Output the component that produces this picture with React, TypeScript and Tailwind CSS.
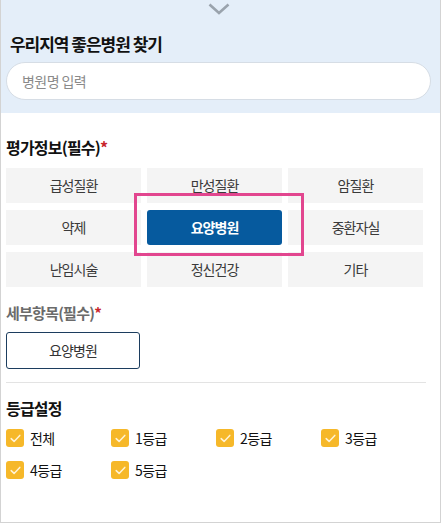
import React from "react";

const categories = [
    "급성질환",
    "만성질환",
    "암질환",
    "약제",
    "요양병원",
    "중환자실",
    "난임시술",
    "정신건강",
    "기타",
];

const grades = ["전체", "1등급", "2등급", "3등급", "4등급", "5등급"];

const CheckBox = ({ label }: { label: string }) => {
    return (
        <label className="flex w-[105px] items-center gap-[6px]">
            <span className="flex h-[18px] w-[18px] items-center justify-center rounded-[3px] bg-[#f6b829]">
                <svg width="11" height="9" viewBox="0 0 11 9" fill="none">
                    <path
                        d="M1.2 4.6 L4.1 7.4 L9.8 1.4"
                        stroke="#fff3d6"
                        strokeWidth="1.5"
                        strokeLinecap="round"
                        strokeLinejoin="round"
                    />
                </svg>
            </span>
            <span className="text-[14px] leading-[20px] tracking-[-0.04em] text-[#111]">{label}</span>
        </label>
    );
};

export default function App() {
    return (
        <div
            className="h-[523px] w-[441px] overflow-hidden border-x border-b border-[#d3d3d3] bg-white"
            style={{ fontFamily: '"Noto Sans CJK KR", "Noto Sans", sans-serif' }}
        >
            {/* search header */}
            <div className="bg-[#e4eef9] pb-[13px]">
                <div className="flex justify-center pt-[3px]">
                    <svg width="22" height="12" viewBox="0 0 22 12" fill="none" className="-ml-[3px]">
                        <path d="M1.5 1.5 L11 10 L20.5 1.5" stroke="#9aa3ad" strokeWidth="2.6" />
                    </svg>
                </div>
                <h2 className="mt-[16px] pl-[9px] text-[17px] font-bold leading-[26px] tracking-[-0.06em] text-[#111]">
                    우리지역 좋은병원 찾기
                </h2>
                <div className="ml-[5px] mt-[5px] flex h-[38px] w-[425px] items-center rounded-full border border-[#d6dde5] bg-white pl-[15px]">
                    <input
                        placeholder="병원명 입력"
                        className="w-full bg-transparent text-[14px] tracking-[-0.04em] text-[#333] outline-none placeholder:text-[#8a8a8a]"
                    />
                </div>
            </div>

            <div className="px-[5px]">
                <h3 className="pt-[22px] text-[16px] font-bold leading-[24px] tracking-[-0.05em] text-[#111]">
                    평가정보(필수)<span className="text-[#c9252c]">*</span>
                </h3>

                <div className="relative mt-[9px] grid w-[417px] grid-cols-3 gap-x-[6px] gap-y-[7px] tracking-[-0.06em]">
                    {categories.map((c) =>
                        c === "요양병원" ? (
                            <div
                                key={c}
                                className="flex h-[35px] items-center justify-center rounded-[3px] bg-[#065a9e] text-[14px] font-bold text-white"
                            >
                                {c}
                            </div>
                        ) : (
                            <div
                                key={c}
                                className="flex h-[35px] items-center justify-center bg-[#f4f4f4] text-[14px] text-[#3a3a3a]"
                            >
                                {c}
                            </div>
                        )
                    )}
                    <div className="pointer-events-none absolute left-[128px] top-[25px] h-[63px] w-[170px] border-[3px] border-[#e2468f]" />
                </div>

                <h3 className="mt-[15px] text-[15px] font-bold leading-[22px] tracking-[-0.05em] text-[#6b6b6b]">
                    세부항목(필수)<span className="text-[#c9252c]">*</span>
                </h3>
                <div className="mt-[8px] flex h-[37px] w-[134px] items-center justify-center rounded-[3px] border border-[#1c3d5e] text-[14px] tracking-[-0.06em] text-[#333]">
                    요양병원
                </div>

                <div className="mt-[13px] h-px w-[420px] bg-[#e3e3e3]" />

                <h3 className="mt-[13px] text-[16px] font-bold leading-[24px] tracking-[-0.05em] text-[#111]">등급설정</h3>
                <div className="mt-[8px] flex flex-wrap gap-y-[12px]">
                    {grades.map((g) => (
                        <CheckBox key={g} label={g} />
                    ))}
                </div>
            </div>
        </div>
    );
}
